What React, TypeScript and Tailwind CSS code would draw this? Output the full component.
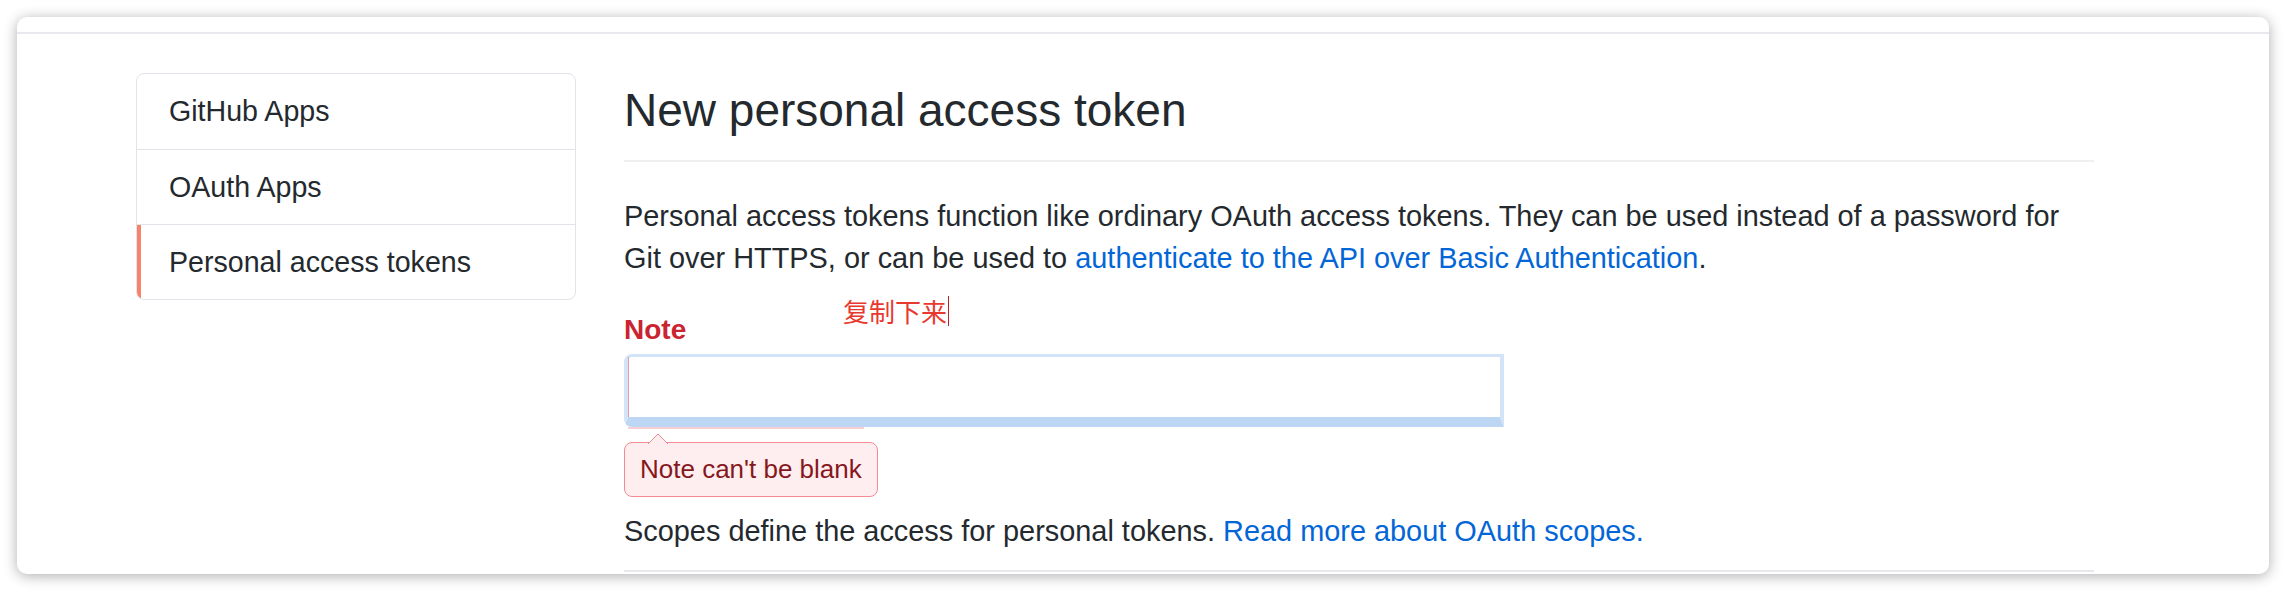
import React from 'react'

const sidebarItems = [
  { label: 'GitHub Apps', active: false },
  { label: 'OAuth Apps', active: false },
  { label: 'Personal access tokens', active: true },
]

function Sidebar() {
  return (
    <nav className="w-[440px] shrink-0 self-start overflow-hidden rounded-[8px] border border-[#e1e4e8] bg-white">
      {sidebarItems.map((item, idx) => (
        <div
          key={item.label}
          className={`flex h-[75px] items-center px-[32px] text-[28.6px] text-[#24292e] ${
            idx > 0 ? 'border-t border-[#e1e4e8]' : ''
          } ${item.active ? 'shadow-[inset_4px_0_0_#f9826c]' : ''}`}
        >
          {item.label}
        </div>
      ))}
    </nav>
  )
}

function NoteField() {
  return (
    <div>
      <div className="relative mt-[33px] h-[36px]">
        <label className="text-[28px] font-bold leading-[36px] text-[#cb2431]">Note</label>
        {/* screenshot annotation */}
        <div className="absolute left-[217px] top-[-16px] flex items-center bg-[#fefefe] px-[2px]">
          <span
            className="text-[26px] leading-[30px] text-[#e8392f]"
            style={{ fontFamily: '"Noto Sans CJK SC", sans-serif' }}
          >
            复制下来
          </span>
          <span className="ml-px h-[30px] w-px bg-[#b3262b]" />
        </div>
      </div>

      <div className="mt-[6px] w-[880px]">
        <div className="h-[73px] rounded-l-[8px] border-t-[3px] border-r-[4px] border-b-[10px] border-l-[4px] border-[#d3e4f8] border-b-[#bcd6f4] bg-white">
          <div className="h-full border-l border-[#ec9aa2]" />
        </div>
        <div className="ml-[4px] h-[2px] w-[236px] bg-[#f6d0d4]" />
      </div>

      <div className="relative mt-[13px] flex h-[55px] w-fit items-center whitespace-nowrap rounded-[8px] border border-[#f58a94] bg-[#ffeef0] px-[15px] text-[26px] text-[#86181d]">
        <svg
          className="absolute left-[23px] top-[-9px]"
          width="20"
          height="10"
          viewBox="0 0 20 10"
        >
          <path d="M0 10 L10 0 L20 10" fill="#ffeef0" stroke="#f58a94" strokeWidth="1" />
        </svg>
        Note can't be blank
      </div>
    </div>
  )
}

export default function App() {
  return (
    <div
      className="h-[592px] w-[2286px] bg-white p-[17px] pb-[18px]"
      style={{ fontFamily: '"Liberation Sans", Arial, sans-serif' }}
    >
      <div className="h-full overflow-hidden rounded-[10px] bg-white shadow-[0_2px_14px_rgba(0,0,0,0.32)]">
        <div className="h-[15px]" />
        <div className="h-[2px] bg-[#e8e9ee]" />

        <div className="flex gap-[48px] pl-[119px] pt-[39px]">
          <Sidebar />

          <main className="w-[1470px] pt-[9px] text-[#24292e]">
            <h2 className="border-b-2 border-[#eef0f2] pb-[21px] text-[46px] font-normal leading-[57px]">
              New personal access token
            </h2>

            <p className="mt-[33px] text-[28.9px] leading-[42px]">
              Personal access tokens function like ordinary OAuth access tokens. They can be used instead of a password for
              <br />
              Git over HTTPS, or can be used to{' '}
              <a className="text-[#0366d6]" href="#">
                authenticate to the API over Basic Authentication
              </a>
              .
            </p>

            <NoteField />

            <p className="mt-[13px] text-[28.9px] leading-[42px]">
              Scopes define the access for personal tokens.{' '}
              <a className="text-[#0366d6]" href="#">
                Read more about OAuth scopes.
              </a>
            </p>

            <div className="mt-[18px] border-t-2 border-[#e6e8ec]" />
          </main>
        </div>
      </div>
    </div>
  )
}
